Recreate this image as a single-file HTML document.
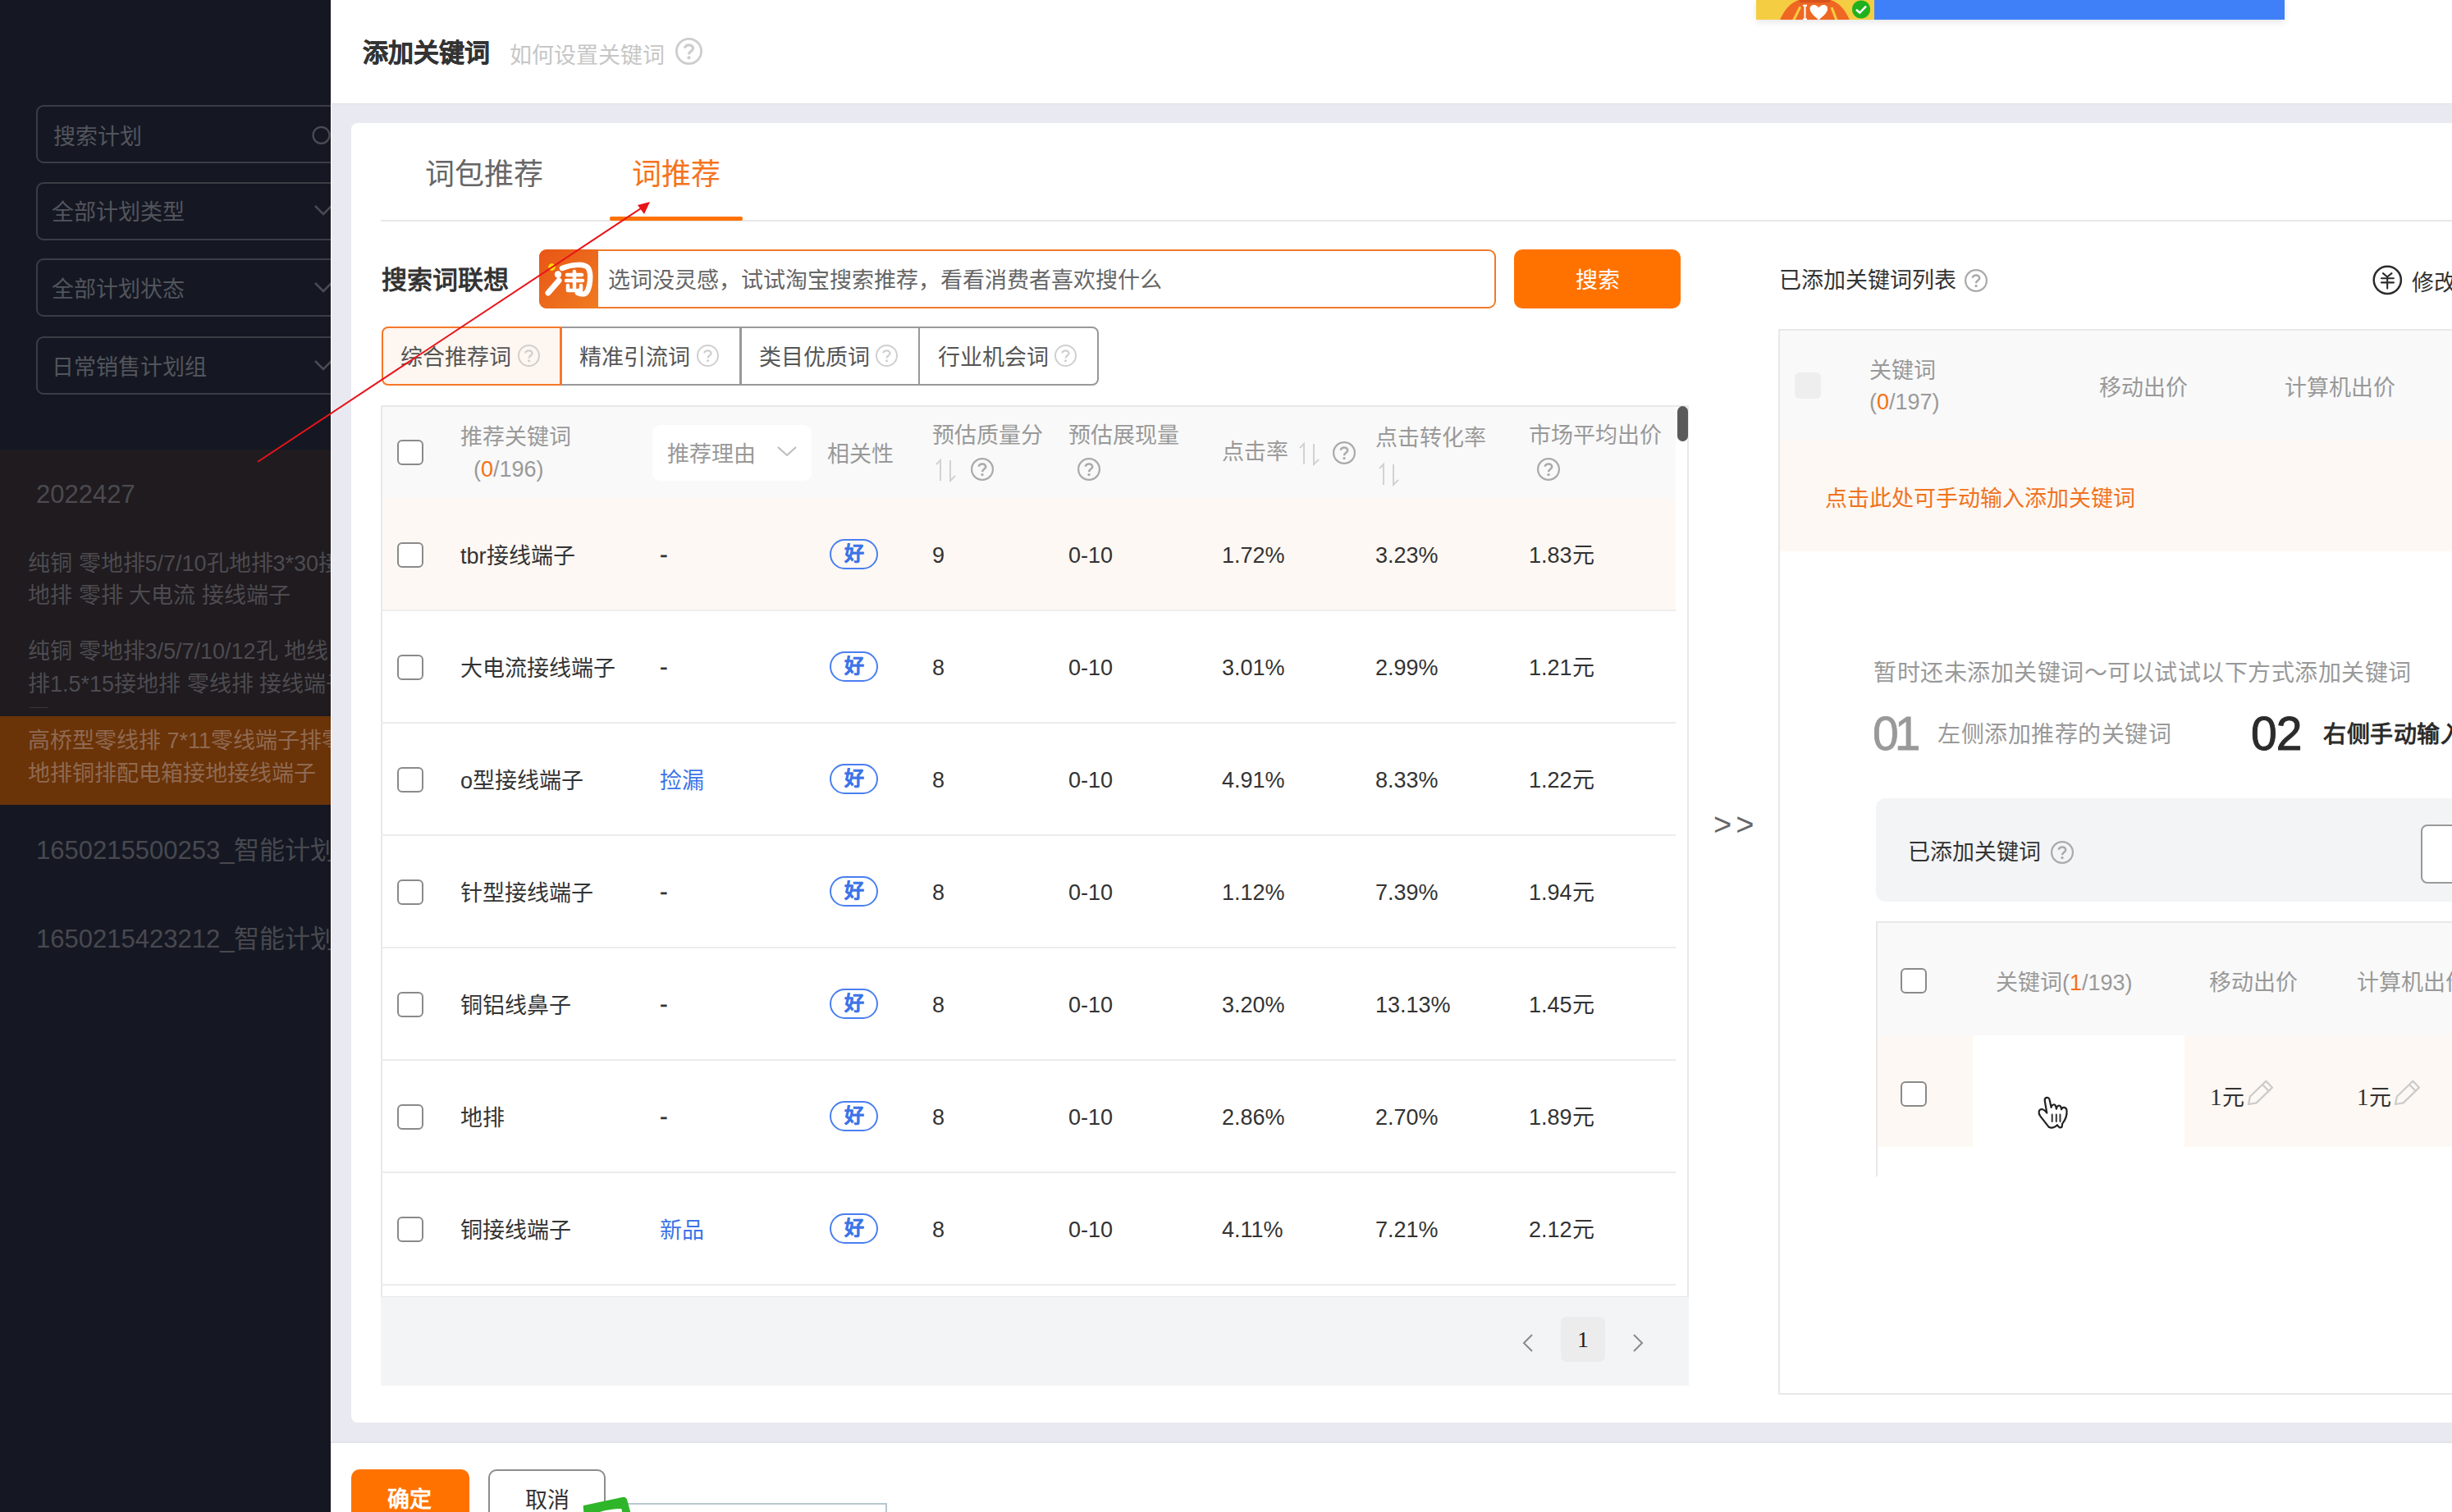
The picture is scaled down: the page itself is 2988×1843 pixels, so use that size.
<!DOCTYPE html>
<html lang="zh-CN"><head><meta charset="utf-8">
<style>
*{box-sizing:border-box;margin:0;padding:0}
html,body{width:2988px;height:1843px;overflow:hidden;background:#fff}
body{position:relative;font-family:"Liberation Sans",sans-serif;color:#333}
.a{position:absolute}
.t{position:absolute;white-space:nowrap;line-height:40px;font-size:27px}
.lbox{position:absolute;left:44px;width:420px;height:71px;border:2px solid #3b3d45;border-radius:9px}
.lt{color:#53555c}
.q{position:absolute;width:28px;height:28px}
.cb{position:absolute;left:484px;width:32px;height:31px;border:2px solid #8a8a8a;border-radius:6px;background:#fff}
.badge{position:absolute;left:1011px;width:59px;height:37px;border:2px solid #4a7ff0;border-radius:19px;color:#3d74e8;font-size:24px;font-weight:bold;line-height:32px;text-align:center;-webkit-text-stroke:0.3px #3d74e8}
.hd{color:#999}
.rl{position:absolute;left:464px;width:1578px;height:2px;background:#ececec}
.ftab{position:absolute;top:398px;height:72px;border:2px solid #999;color:#555}
.blue{color:#3d74e8}
.or{color:#f5701a}
</style></head><body>
<!-- LEFT DARK PANEL -->
<div class="a" style="left:0;top:0;width:403px;height:1843px;background:#151823"></div>
<div class="lbox" style="top:128px"></div>
<div class="lbox" style="top:222px"></div>
<div class="lbox" style="top:315px"></div>
<div class="lbox" style="top:410px"></div>
<div class="t lt" style="left:65px;top:147px">搜索计划</div>
<div class="t lt" style="left:63px;top:239px">全部计划类型</div>
<div class="t lt" style="left:63px;top:333px">全部计划状态</div>
<div class="t lt" style="left:63px;top:428px">日常销售计划组</div>
<svg class="a" style="left:370px;top:145px" width="40" height="40"><circle cx="21.5" cy="19.8" r="10" fill="none" stroke="#4a4c53" stroke-width="2.2"/></svg>
<svg class="a" style="left:380px;top:245px" width="30" height="220"><path d="M4 6 L14 16 L24 6" fill="none" stroke="#4a4c53" stroke-width="2.5"/><path d="M4 100 L14 110 L24 100" fill="none" stroke="#4a4c53" stroke-width="2.5"/><path d="M4 195 L14 205 L24 195" fill="none" stroke="#4a4c53" stroke-width="2.5"/></svg>
<div class="a" style="left:0;top:548px;width:403px;height:325px;background:#1f1b1f"></div>
<div class="a" style="left:0;top:873px;width:403px;height:108px;background:#6b3308"></div>
<div class="t" style="left:44px;top:583px;font-size:31px;color:#4b4a4e">2022427</div>
<div class="t lt" style="left:34px;top:667px;line-height:40px;color:#4d4b50">纯铜 零地排5/7/10孔地排3*30接</div>
<div class="t lt" style="left:34px;top:706px;line-height:40px;color:#4d4b50">地排 零排 大电流 接线端子</div>
<div class="t lt" style="left:34px;top:774px;line-height:40px;color:#4d4b50">纯铜 零地排3/5/7/10/12孔 地线</div>
<div class="t lt" style="left:34px;top:814px;line-height:40px;color:#4d4b50">排1.5*15接地排 零线排 接线端子</div>
<div class="a" style="left:36px;top:862px;width:22px;height:1px;background:#3a3639"></div>
<div class="t" style="left:34px;top:883px;color:#8f6a52">高桥型零线排 7*11零线端子排零</div>
<div class="t" style="left:34px;top:923px;color:#8f6a52">地排铜排配电箱接地接线端子</div>
<div class="t" style="left:44px;top:1017px;font-size:31px;color:#48494f">1650215500253_智能计划</div>
<div class="t" style="left:44px;top:1125px;font-size:31px;color:#48494f">1650215423212_智能计划</div>
<!-- MODAL -->
<div class="a" style="left:403px;top:0;width:2585px;height:1843px;background:#fff"></div>
<div class="a" style="left:404px;top:126px;width:2584px;height:1632px;background:#e9eaf1;border-top:1px solid #dedfe4"></div>
<div class="a" style="left:428px;top:150px;width:2600px;height:1584px;background:#fff;border-radius:8px"></div>
<div class="t" style="left:442px;top:45px;font-size:31px;font-weight:bold;color:#333;-webkit-text-stroke:0.4px #333">添加关键词</div>
<div class="t" style="left:621px;top:48px;font-size:27px;color:#c6c6c6">如何设置关键词</div>

<!-- TABS -->
<div class="t" style="left:518px;top:191px;font-size:36px;line-height:44px;color:#666">词包推荐</div>
<div class="t" style="left:770px;top:191px;font-size:36px;line-height:44px;color:#f5731c">词推荐</div>
<div class="a" style="left:464px;top:268px;width:2600px;height:2px;background:#e8e8e8"></div>
<div class="a" style="left:743px;top:264px;width:162px;height:5px;background:#ff7200;border-radius:2px"></div>
<!-- SEARCH ROW -->
<div class="t" style="left:465px;top:322px;font-size:31px;font-weight:bold;color:#333">搜索词联想</div>
<div class="a" style="left:657px;top:304px;width:1166px;height:72px;border:2px solid #f07a2a;border-radius:9px"></div>
<div class="a" style="left:657px;top:304px;width:72px;height:72px;border-radius:9px 0 0 9px;background:linear-gradient(135deg,#e85516,#f07c20)"></div>
<svg class="a" style="left:657px;top:304px" width="72" height="72">
 <circle cx="15.5" cy="21.5" r="4.2" fill="#ffe000"/>
 <circle cx="23" cy="30.5" r="4.2" fill="#fff"/>
 <path d="M11 53 L24 38" stroke="#fff" stroke-width="7" stroke-linecap="round"/>
 <path d="M28 23 C40 18 56 17 60 23 C64 30 62 46 58 52 C56 55 52 55 47 53" fill="none" stroke="#fff" stroke-width="6.5" stroke-linecap="round"/>
 <path d="M34 31 H52 M43 27 V47 M33 38 H53 M35 44 V50 H51 V44" fill="none" stroke="#fff" stroke-width="4.5" stroke-linecap="round" stroke-linejoin="round"/>
</svg>
<div class="t" style="left:741px;top:322px;color:#666">选词没灵感，试试淘宝搜索推荐，看看消费者喜欢搜什么</div>
<div class="a" style="left:1845px;top:304px;width:203px;height:72px;border-radius:10px;background:#ff7200"></div>
<div class="t" style="left:1920px;top:322px;color:#fff">搜索</div>
<!-- FILTER TABS -->
<div class="ftab" style="left:465px;width:219px;border-color:#f5782a;border-radius:8px 0 0 8px;background:#fef6f0"></div>
<div class="ftab" style="left:683px;width:220px;border-left:2px solid #999"></div>
<div class="ftab" style="left:902px;width:219px"></div>
<div class="ftab" style="left:1119px;width:220px;border-radius:0 8px 8px 0"></div>
<div class="a" style="left:682px;top:398px;width:2px;height:72px;background:#f5782a"></div>
<div class="t" style="left:488px;top:416px;color:#555">综合推荐词</div>
<div class="t" style="left:706px;top:416px;color:#555">精准引流词</div>
<div class="t" style="left:925px;top:416px;color:#555">类目优质词</div>
<div class="t" style="left:1143px;top:416px;color:#555">行业机会词</div>

<svg class="a" style="left:823px;top:46px" width="33" height="33"><circle cx="16.5" cy="16.5" r="15.1" fill="none" stroke="#cdcdcd" stroke-width="2.8"/><path d="M11.55 12.73 C11.55 7.54 21.92 7.54 21.45 13.44 C21.21 16.03 16.50 16.74 16.50 20.27" fill="none" stroke="#cdcdcd" stroke-width="3.22"/><circle cx="16.5" cy="24.28" r="2.10" fill="#cdcdcd"/></svg>
<svg class="a" style="left:631px;top:420px" width="27" height="27"><circle cx="13.5" cy="13.5" r="12.5" fill="none" stroke="#cfcfcf" stroke-width="2"/><path d="M9.45 10.41 C9.45 6.17 17.94 6.17 17.55 10.99 C17.36 13.11 13.50 13.69 13.50 16.59" fill="none" stroke="#cfcfcf" stroke-width="2.30"/><circle cx="13.5" cy="19.86" r="1.50" fill="#cfcfcf"/></svg>
<svg class="a" style="left:849px;top:420px" width="27" height="27"><circle cx="13.5" cy="13.5" r="12.5" fill="none" stroke="#cfcfcf" stroke-width="2"/><path d="M9.45 10.41 C9.45 6.17 17.94 6.17 17.55 10.99 C17.36 13.11 13.50 13.69 13.50 16.59" fill="none" stroke="#cfcfcf" stroke-width="2.30"/><circle cx="13.5" cy="19.86" r="1.50" fill="#cfcfcf"/></svg>
<svg class="a" style="left:1067px;top:420px" width="27" height="27"><circle cx="13.5" cy="13.5" r="12.5" fill="none" stroke="#cfcfcf" stroke-width="2"/><path d="M9.45 10.41 C9.45 6.17 17.94 6.17 17.55 10.99 C17.36 13.11 13.50 13.69 13.50 16.59" fill="none" stroke="#cfcfcf" stroke-width="2.30"/><circle cx="13.5" cy="19.86" r="1.50" fill="#cfcfcf"/></svg>
<svg class="a" style="left:1285px;top:420px" width="27" height="27"><circle cx="13.5" cy="13.5" r="12.5" fill="none" stroke="#cfcfcf" stroke-width="2"/><path d="M9.45 10.41 C9.45 6.17 17.94 6.17 17.55 10.99 C17.36 13.11 13.50 13.69 13.50 16.59" fill="none" stroke="#cfcfcf" stroke-width="2.30"/><circle cx="13.5" cy="19.86" r="1.50" fill="#cfcfcf"/></svg>
<div class="a" style="left:464px;top:494px;width:1594px;height:1195px;border:2px solid #e8e8e8;border-bottom:none;background:#fff"></div>
<div class="a" style="left:466px;top:496px;width:1576px;height:112px;background:#f9f9f9"></div>
<div class="a" style="left:466px;top:608px;width:1576px;height:136px;background:#fdf8f3"></div>
<div class="a" style="left:2044px;top:495px;width:13px;height:43px;border-radius:7px;background:#5a5a5a"></div>
<div class="cb" style="top:536px"></div>
<div class="t" style="left:561px;top:513.0px;font-size:27px;line-height:40px;color:#999;">推荐关键词</div>
<div class="t" style="left:577px;top:552.0px;font-size:27px;line-height:40px;color:#999;">(<span class="or">0</span>/196)</div>
<div class="a" style="left:795px;top:518px;width:194px;height:68px;background:#fff;border-radius:10px"></div>
<div class="t" style="left:813px;top:534.0px;font-size:27px;line-height:40px;color:#999;">推荐理由</div>
<svg class="a" style="left:946px;top:540px" width="26" height="20"><path d="M2 5 L13 15 L24 5" fill="none" stroke="#bbb" stroke-width="2"/></svg>
<div class="t" style="left:1008px;top:534.0px;font-size:27px;line-height:40px;color:#999;">相关性</div>
<div class="t" style="left:1136px;top:511.0px;font-size:27px;line-height:40px;color:#999;">预估质量分</div>
<svg class="a" style="left:1139px;top:558px" width="26" height="30"><path d="M7 28 V3 L2 8" fill="none" stroke="#d2d2d2" stroke-width="2"/><path d="M19 3 V28 L25 22" fill="none" stroke="#d2d2d2" stroke-width="2"/></svg>
<svg class="a" style="left:1183px;top:558px" width="28" height="28"><circle cx="14.0" cy="14.0" r="12.9" fill="none" stroke="#aaa" stroke-width="2.2"/><path d="M9.80 10.80 C9.80 6.40 18.60 6.40 18.20 11.40 C18.00 13.60 14.00 14.20 14.00 17.20" fill="none" stroke="#aaa" stroke-width="2.53"/><circle cx="14.0" cy="20.60" r="1.65" fill="#aaa"/></svg>
<div class="t" style="left:1302px;top:511.0px;font-size:27px;line-height:40px;color:#999;">预估展现量</div>
<svg class="a" style="left:1313px;top:558px" width="28" height="28"><circle cx="14.0" cy="14.0" r="12.9" fill="none" stroke="#aaa" stroke-width="2.2"/><path d="M9.80 10.80 C9.80 6.40 18.60 6.40 18.20 11.40 C18.00 13.60 14.00 14.20 14.00 17.20" fill="none" stroke="#aaa" stroke-width="2.53"/><circle cx="14.0" cy="20.60" r="1.65" fill="#aaa"/></svg>
<div class="t" style="left:1489px;top:531.0px;font-size:27px;line-height:40px;color:#999;">点击率</div>
<svg class="a" style="left:1582px;top:538px" width="26" height="30"><path d="M7 28 V3 L2 8" fill="none" stroke="#d2d2d2" stroke-width="2"/><path d="M19 3 V28 L25 22" fill="none" stroke="#d2d2d2" stroke-width="2"/></svg>
<svg class="a" style="left:1624px;top:538px" width="28" height="28"><circle cx="14.0" cy="14.0" r="12.9" fill="none" stroke="#aaa" stroke-width="2.2"/><path d="M9.80 10.80 C9.80 6.40 18.60 6.40 18.20 11.40 C18.00 13.60 14.00 14.20 14.00 17.20" fill="none" stroke="#aaa" stroke-width="2.53"/><circle cx="14.0" cy="20.60" r="1.65" fill="#aaa"/></svg>
<div class="t" style="left:1676px;top:514.0px;font-size:27px;line-height:40px;color:#999;">点击转化率</div>
<svg class="a" style="left:1679px;top:563px" width="26" height="30"><path d="M7 28 V3 L2 8" fill="none" stroke="#d2d2d2" stroke-width="2"/><path d="M19 3 V28 L25 22" fill="none" stroke="#d2d2d2" stroke-width="2"/></svg>
<div class="t" style="left:1863px;top:511.0px;font-size:27px;line-height:40px;color:#999;">市场平均出价</div>
<svg class="a" style="left:1873px;top:558px" width="28" height="28"><circle cx="14.0" cy="14.0" r="12.9" fill="none" stroke="#aaa" stroke-width="2.2"/><path d="M9.80 10.80 C9.80 6.40 18.60 6.40 18.20 11.40 C18.00 13.60 14.00 14.20 14.00 17.20" fill="none" stroke="#aaa" stroke-width="2.53"/><circle cx="14.0" cy="20.60" r="1.65" fill="#aaa"/></svg>
<div class="cb" style="top:661px"></div>
<div class="t" style="left:561px;top:658.0px;font-size:27px;line-height:40px;color:#333;">tbr接线端子</div>
<div class="t" style="left:804px;top:656.0px;font-size:29px;line-height:40px;color:#333;-webkit-text-stroke:0.3px #333;">-</div>
<div class="badge" style="top:657px">好</div>
<div class="t" style="left:1136px;top:657.0px;font-size:27px;line-height:40px;color:#333;">9</div>
<div class="t" style="left:1302px;top:657.0px;font-size:27px;line-height:40px;color:#333;">0-10</div>
<div class="t" style="left:1489px;top:657.0px;font-size:27px;line-height:40px;color:#333;">1.72%</div>
<div class="t" style="left:1676px;top:657.0px;font-size:27px;line-height:40px;color:#333;">3.23%</div>
<div class="t" style="left:1863px;top:657.0px;font-size:27px;line-height:40px;color:#333;">1.83元</div>
<div class="rl" style="top:743px"></div>
<div class="cb" style="top:798px"></div>
<div class="t" style="left:561px;top:795.0px;font-size:27px;line-height:40px;color:#333;">大电流接线端子</div>
<div class="t" style="left:804px;top:793.0px;font-size:29px;line-height:40px;color:#333;-webkit-text-stroke:0.3px #333;">-</div>
<div class="badge" style="top:794px">好</div>
<div class="t" style="left:1136px;top:794.0px;font-size:27px;line-height:40px;color:#333;">8</div>
<div class="t" style="left:1302px;top:794.0px;font-size:27px;line-height:40px;color:#333;">0-10</div>
<div class="t" style="left:1489px;top:794.0px;font-size:27px;line-height:40px;color:#333;">3.01%</div>
<div class="t" style="left:1676px;top:794.0px;font-size:27px;line-height:40px;color:#333;">2.99%</div>
<div class="t" style="left:1863px;top:794.0px;font-size:27px;line-height:40px;color:#333;">1.21元</div>
<div class="rl" style="top:880px"></div>
<div class="cb" style="top:935px"></div>
<div class="t" style="left:561px;top:932.0px;font-size:27px;line-height:40px;color:#333;">o型接线端子</div>
<div class="t" style="left:804px;top:932.0px;font-size:27px;line-height:40px;color:#3d74e8;">捡漏</div>
<div class="badge" style="top:931px">好</div>
<div class="t" style="left:1136px;top:931.0px;font-size:27px;line-height:40px;color:#333;">8</div>
<div class="t" style="left:1302px;top:931.0px;font-size:27px;line-height:40px;color:#333;">0-10</div>
<div class="t" style="left:1489px;top:931.0px;font-size:27px;line-height:40px;color:#333;">4.91%</div>
<div class="t" style="left:1676px;top:931.0px;font-size:27px;line-height:40px;color:#333;">8.33%</div>
<div class="t" style="left:1863px;top:931.0px;font-size:27px;line-height:40px;color:#333;">1.22元</div>
<div class="rl" style="top:1017px"></div>
<div class="cb" style="top:1072px"></div>
<div class="t" style="left:561px;top:1069.0px;font-size:27px;line-height:40px;color:#333;">针型接线端子</div>
<div class="t" style="left:804px;top:1067.0px;font-size:29px;line-height:40px;color:#333;-webkit-text-stroke:0.3px #333;">-</div>
<div class="badge" style="top:1068px">好</div>
<div class="t" style="left:1136px;top:1068.0px;font-size:27px;line-height:40px;color:#333;">8</div>
<div class="t" style="left:1302px;top:1068.0px;font-size:27px;line-height:40px;color:#333;">0-10</div>
<div class="t" style="left:1489px;top:1068.0px;font-size:27px;line-height:40px;color:#333;">1.12%</div>
<div class="t" style="left:1676px;top:1068.0px;font-size:27px;line-height:40px;color:#333;">7.39%</div>
<div class="t" style="left:1863px;top:1068.0px;font-size:27px;line-height:40px;color:#333;">1.94元</div>
<div class="rl" style="top:1154px"></div>
<div class="cb" style="top:1209px"></div>
<div class="t" style="left:561px;top:1206.0px;font-size:27px;line-height:40px;color:#333;">铜铝线鼻子</div>
<div class="t" style="left:804px;top:1204.0px;font-size:29px;line-height:40px;color:#333;-webkit-text-stroke:0.3px #333;">-</div>
<div class="badge" style="top:1205px">好</div>
<div class="t" style="left:1136px;top:1205.0px;font-size:27px;line-height:40px;color:#333;">8</div>
<div class="t" style="left:1302px;top:1205.0px;font-size:27px;line-height:40px;color:#333;">0-10</div>
<div class="t" style="left:1489px;top:1205.0px;font-size:27px;line-height:40px;color:#333;">3.20%</div>
<div class="t" style="left:1676px;top:1205.0px;font-size:27px;line-height:40px;color:#333;">13.13%</div>
<div class="t" style="left:1863px;top:1205.0px;font-size:27px;line-height:40px;color:#333;">1.45元</div>
<div class="rl" style="top:1291px"></div>
<div class="cb" style="top:1346px"></div>
<div class="t" style="left:561px;top:1343.0px;font-size:27px;line-height:40px;color:#333;">地排</div>
<div class="t" style="left:804px;top:1341.0px;font-size:29px;line-height:40px;color:#333;-webkit-text-stroke:0.3px #333;">-</div>
<div class="badge" style="top:1342px">好</div>
<div class="t" style="left:1136px;top:1342.0px;font-size:27px;line-height:40px;color:#333;">8</div>
<div class="t" style="left:1302px;top:1342.0px;font-size:27px;line-height:40px;color:#333;">0-10</div>
<div class="t" style="left:1489px;top:1342.0px;font-size:27px;line-height:40px;color:#333;">2.86%</div>
<div class="t" style="left:1676px;top:1342.0px;font-size:27px;line-height:40px;color:#333;">2.70%</div>
<div class="t" style="left:1863px;top:1342.0px;font-size:27px;line-height:40px;color:#333;">1.89元</div>
<div class="rl" style="top:1428px"></div>
<div class="cb" style="top:1483px"></div>
<div class="t" style="left:561px;top:1480.0px;font-size:27px;line-height:40px;color:#333;">铜接线端子</div>
<div class="t" style="left:804px;top:1480.0px;font-size:27px;line-height:40px;color:#3d74e8;">新品</div>
<div class="badge" style="top:1479px">好</div>
<div class="t" style="left:1136px;top:1479.0px;font-size:27px;line-height:40px;color:#333;">8</div>
<div class="t" style="left:1302px;top:1479.0px;font-size:27px;line-height:40px;color:#333;">0-10</div>
<div class="t" style="left:1489px;top:1479.0px;font-size:27px;line-height:40px;color:#333;">4.11%</div>
<div class="t" style="left:1676px;top:1479.0px;font-size:27px;line-height:40px;color:#333;">7.21%</div>
<div class="t" style="left:1863px;top:1479.0px;font-size:27px;line-height:40px;color:#333;">2.12元</div>
<div class="rl" style="top:1565px"></div>
<div class="a" style="left:464px;top:1580px;width:1594px;height:2px;background:#e8e8e8"></div>
<div class="a" style="left:464px;top:1581px;width:1594px;height:108px;background:#f3f4f6"></div>
<svg class="a" style="left:1850px;top:1622px" width="24" height="30"><path d="M17 5 L7 15 L17 25" fill="none" stroke="#8a8a8a" stroke-width="2"/></svg>
<div class="a" style="left:1902px;top:1605px;width:54px;height:55px;border-radius:7px;background:#ececec"></div>
<div class="t" style="left:1922px;top:1613.0px;font-size:28px;line-height:40px;color:#222;font-family:'Liberation Serif',serif;">1</div>
<svg class="a" style="left:1984px;top:1622px" width="24" height="30"><path d="M7 5 L17 15 L7 25" fill="none" stroke="#8a8a8a" stroke-width="2"/></svg>
<div class="t" style="left:2088px;top:983.0px;font-size:38px;line-height:44px;color:#666;letter-spacing:5px;">&gt;&gt;</div><div class="t" style="left:2168px;top:322.0px;font-size:27px;line-height:40px;color:#333;">已添加关键词列表</div>
<svg class="a" style="left:2394px;top:328px" width="28" height="28"><circle cx="14.0" cy="14.0" r="12.9" fill="none" stroke="#aaa" stroke-width="2.2"/><path d="M9.80 10.80 C9.80 6.40 18.60 6.40 18.20 11.40 C18.00 13.60 14.00 14.20 14.00 17.20" fill="none" stroke="#aaa" stroke-width="2.53"/><circle cx="14.0" cy="20.60" r="1.65" fill="#aaa"/></svg>
<svg class="a" style="left:2889px;top:322px" width="40" height="40"><circle cx="20.3" cy="19.3" r="16.6" fill="none" stroke="#2b2b2b" stroke-width="2.5"/><path d="M14.9 11.1 L20.2 15.5 L25.5 11.1 M20.2 15.5 V29.6 M13 17.2 H27.9 M13 22.4 H27.9" fill="none" stroke="#2b2b2b" stroke-width="2.1" stroke-linecap="round"/></svg>
<div class="t" style="left:2939px;top:325.0px;font-size:27px;line-height:40px;color:#333;">修改</div>
<div class="a" style="left:2167px;top:401px;width:900px;height:1299px;border:2px solid #e8e8e8;background:#fff"></div>
<div class="a" style="left:2169px;top:403px;width:900px;height:134px;background:#f9f9f9"></div>
<div class="a" style="left:2187px;top:454px;width:32px;height:32px;border-radius:6px;background:#eeeeee"></div>
<div class="t" style="left:2278px;top:432.0px;font-size:27px;line-height:40px;color:#999;">关键词</div>
<div class="t" style="left:2278px;top:470.0px;font-size:27px;line-height:40px;color:#999;">(<span style="color:#f5701a">0</span>/197)</div>
<div class="t" style="left:2558px;top:453.0px;font-size:27px;line-height:40px;color:#999;">移动出价</div>
<div class="t" style="left:2784px;top:453.0px;font-size:27px;line-height:40px;color:#999;">计算机出价</div>
<div class="a" style="left:2169px;top:537px;width:900px;height:135px;background:#fdf8f3"></div>
<div class="t" style="left:2224px;top:588.0px;font-size:27px;line-height:40px;color:#f0731f;">点击此处可手动输入添加关键词</div>
<div class="t" style="left:2283px;top:801.0px;font-size:28px;line-height:40px;color:#999;letter-spacing:0.5px;">暂时还未添加关键词～可以试试以下方式添加关键词</div>
<div class="t" style="left:2282px;top:864.0px;font-size:57px;line-height:60px;color:#999;letter-spacing:-5px;-webkit-text-stroke:0.8px #999;">01</div>
<div class="t" style="left:2361px;top:876.0px;font-size:28px;line-height:40px;color:#999;letter-spacing:0.5px;">左侧添加推荐的关键词</div>
<div class="t" style="left:2743px;top:864.0px;font-size:57px;line-height:60px;color:#2b2b2b;letter-spacing:-1px;-webkit-text-stroke:1px #2b2b2b;">02</div>
<div class="t" style="left:2831px;top:876.0px;font-size:28px;line-height:40px;color:#2b2b2b;font-weight:bold;letter-spacing:0.5px;">右侧手动输入添加</div>
<div class="a" style="left:2286px;top:973px;width:800px;height:126px;border-radius:12px;background:#f3f4f6"></div>
<div class="t" style="left:2325px;top:1019.0px;font-size:27px;line-height:40px;color:#333;">已添加关键词</div>
<svg class="a" style="left:2499px;top:1025px" width="28" height="28"><circle cx="14.0" cy="14.0" r="12.9" fill="none" stroke="#aaa" stroke-width="2.2"/><path d="M9.80 10.80 C9.80 6.40 18.60 6.40 18.20 11.40 C18.00 13.60 14.00 14.20 14.00 17.20" fill="none" stroke="#aaa" stroke-width="2.53"/><circle cx="14.0" cy="20.60" r="1.65" fill="#aaa"/></svg>
<div class="a" style="left:2950px;top:1005px;width:100px;height:72px;border:2px solid #9a9a9a;border-radius:8px;background:#fff"></div>
<div class="a" style="left:2286px;top:1123px;width:800px;height:311px;border-left:2px solid #e8e8e8;border-top:2px solid #e8e8e8"></div>
<div class="a" style="left:2288px;top:1125px;width:800px;height:137px;background:#f9f9f9"></div>
<div class="a" style="left:2288px;top:1262px;width:800px;height:136px;background:#fdf8f3"></div>
<div class="a" style="left:2404px;top:1262px;width:258px;height:136px;background:#fff"></div>
<div class="cb" style="left:2316px;top:1180px"></div>
<div class="t" style="left:2432px;top:1178.0px;font-size:27px;line-height:40px;color:#999;">关键词(<span style="color:#f5701a">1</span>/193)</div>
<div class="t" style="left:2692px;top:1178.0px;font-size:27px;line-height:40px;color:#999;">移动出价</div>
<div class="t" style="left:2872px;top:1178.0px;font-size:27px;line-height:40px;color:#999;">计算机出价</div>
<div class="cb" style="left:2316px;top:1318px"></div>
<div class="t" style="left:2693px;top:1317.0px;font-size:27px;line-height:40px;color:#333;"><span style="font-family:&quot;Liberation Serif&quot;,serif;font-size:29px">1</span>元</div>
<div class="t" style="left:2872px;top:1317.0px;font-size:27px;line-height:40px;color:#333;"><span style="font-family:&quot;Liberation Serif&quot;,serif;font-size:29px">1</span>元</div>
<svg class="a" style="left:2737px;top:1315px" width="34" height="36"><g transform="translate(3,31) rotate(-44)"><path d="M0 0 L8 -5.5 H35 V5.5 H8 Z M29 -5.5 V5.5" fill="none" stroke="#cbcbcb" stroke-width="2.2" stroke-linejoin="round"/></g></svg>
<svg class="a" style="left:2916px;top:1315px" width="34" height="36"><g transform="translate(3,31) rotate(-44)"><path d="M0 0 L8 -5.5 H35 V5.5 H8 Z M29 -5.5 V5.5" fill="none" stroke="#cbcbcb" stroke-width="2.2" stroke-linejoin="round"/></g></svg>
<svg class="a" style="left:2480px;top:1334px" width="44" height="46"><path d="M14.3 22.6 L11.8 8 C11 3 17 2.5 17.6 6.5 L19.6 15.8 C20.2 12 24.3 11.3 25.1 14.3 L25.9 17.6 C26.3 13.2 30.5 12.5 31.3 15.3 L32.1 18.3 C33 14.6 38 15 38.5 19.5 C39.2 26 36.5 31.5 33.2 35.6 L32.6 39.6 C30.5 41.3 28 39.6 27 37.2 C24.3 41 19.3 41.2 16.6 39.7 L6.2 26.3 C3.3 22.5 4.5 18.2 8 18 C10.3 18 12.4 20.2 14.3 22.6 Z" fill="#fff" stroke="#222" stroke-width="2.2" stroke-linejoin="round"/><path d="M20.7 24.6 V33 M25.8 24.6 V33 M30.5 24.6 V33" stroke="#333" stroke-width="2" stroke-linecap="round"/></svg>
<div class="a" style="left:403px;top:1758px;width:2585px;height:85px;background:#fff"></div>
<div class="a" style="left:403px;top:1757px;width:2585px;height:2px;background:#e3e4ea"></div>
<div class="a" style="left:428px;top:1791px;width:144px;height:80px;border-radius:10px;background:#ff7200"></div>
<div class="t" style="left:472px;top:1808.0px;font-size:27px;line-height:40px;color:#fff;font-weight:bold;">确定</div>
<div class="a" style="left:595px;top:1791px;width:143px;height:80px;border-radius:10px;border:2px solid #8c8c8c;background:#fff"></div>
<div class="t" style="left:640px;top:1809.0px;font-size:27px;line-height:40px;color:#333;">取消</div>
<div class="a" style="left:759px;top:1832px;width:322px;height:40px;border:2px solid #b8c6cf"></div>
<svg class="a" style="left:708px;top:1822px" width="64" height="24"><path d="M3.7 14 L50.6 3.9 Q54 3.3 55.2 6.5 L60 24 L5 30 Z" fill="#2fb52a" stroke="#2fb52a" stroke-width="2" stroke-linejoin="round"/><path d="M16 24 C24 19.5 36 17.3 49.3 17 L51 24 Z" fill="#fff"/></svg>
<div class="a" style="left:2140px;top:0;width:644px;height:24px;box-shadow:0 3px 8px rgba(0,0,0,0.10);background:#3f80f9"></div>
<div class="a" style="left:2140px;top:0;width:144px;height:24px;background:#f5cd42;overflow:hidden"><svg width="144" height="24"><path d="M28.8 25 C34 12 42 3 52.4 0 L90.6 0 C101 3 109 12 114.1 25 Z" fill="#ee6823"/><path d="M52 0 L91 0 L89 3.2 L54 3.2 Z" fill="#d9521b"/><path d="M45.5 25 L53.8 8.3" stroke="#f5cd42" stroke-width="3"/><path d="M92 9 L98.2 25" stroke="#f5cd42" stroke-width="3"/><path d="M57 6.8 H62 M59.5 6.8 V23.5 M57 23.5 H62" stroke="#fff" stroke-width="2"/><path d="M76.3 24.3 C70 19 65.6 15 65.6 10.5 C65.6 7.5 68 6 70.5 6 C73 6 75 7.5 76.3 9.5 C77.6 7.5 79.6 6 82.2 6 C84.8 6 87.1 7.5 87.1 10.5 C87.1 15 82.6 19 76.3 24.3 Z" fill="#fff"/><circle cx="128" cy="11.4" r="11" fill="#22b11e"/><path d="M122 11.8 L126.3 15.6 L134 7.6" fill="none" stroke="#fff" stroke-width="2.5"/></svg></div>
<svg class="a" style="left:0;top:0" width="1000" height="700"><line x1="314" y1="563" x2="784" y2="252" stroke="#e8141a" stroke-width="2"/><path d="M792 246 L777 250 L785 261 Z" fill="#e8141a"/></svg>
</body></html>
